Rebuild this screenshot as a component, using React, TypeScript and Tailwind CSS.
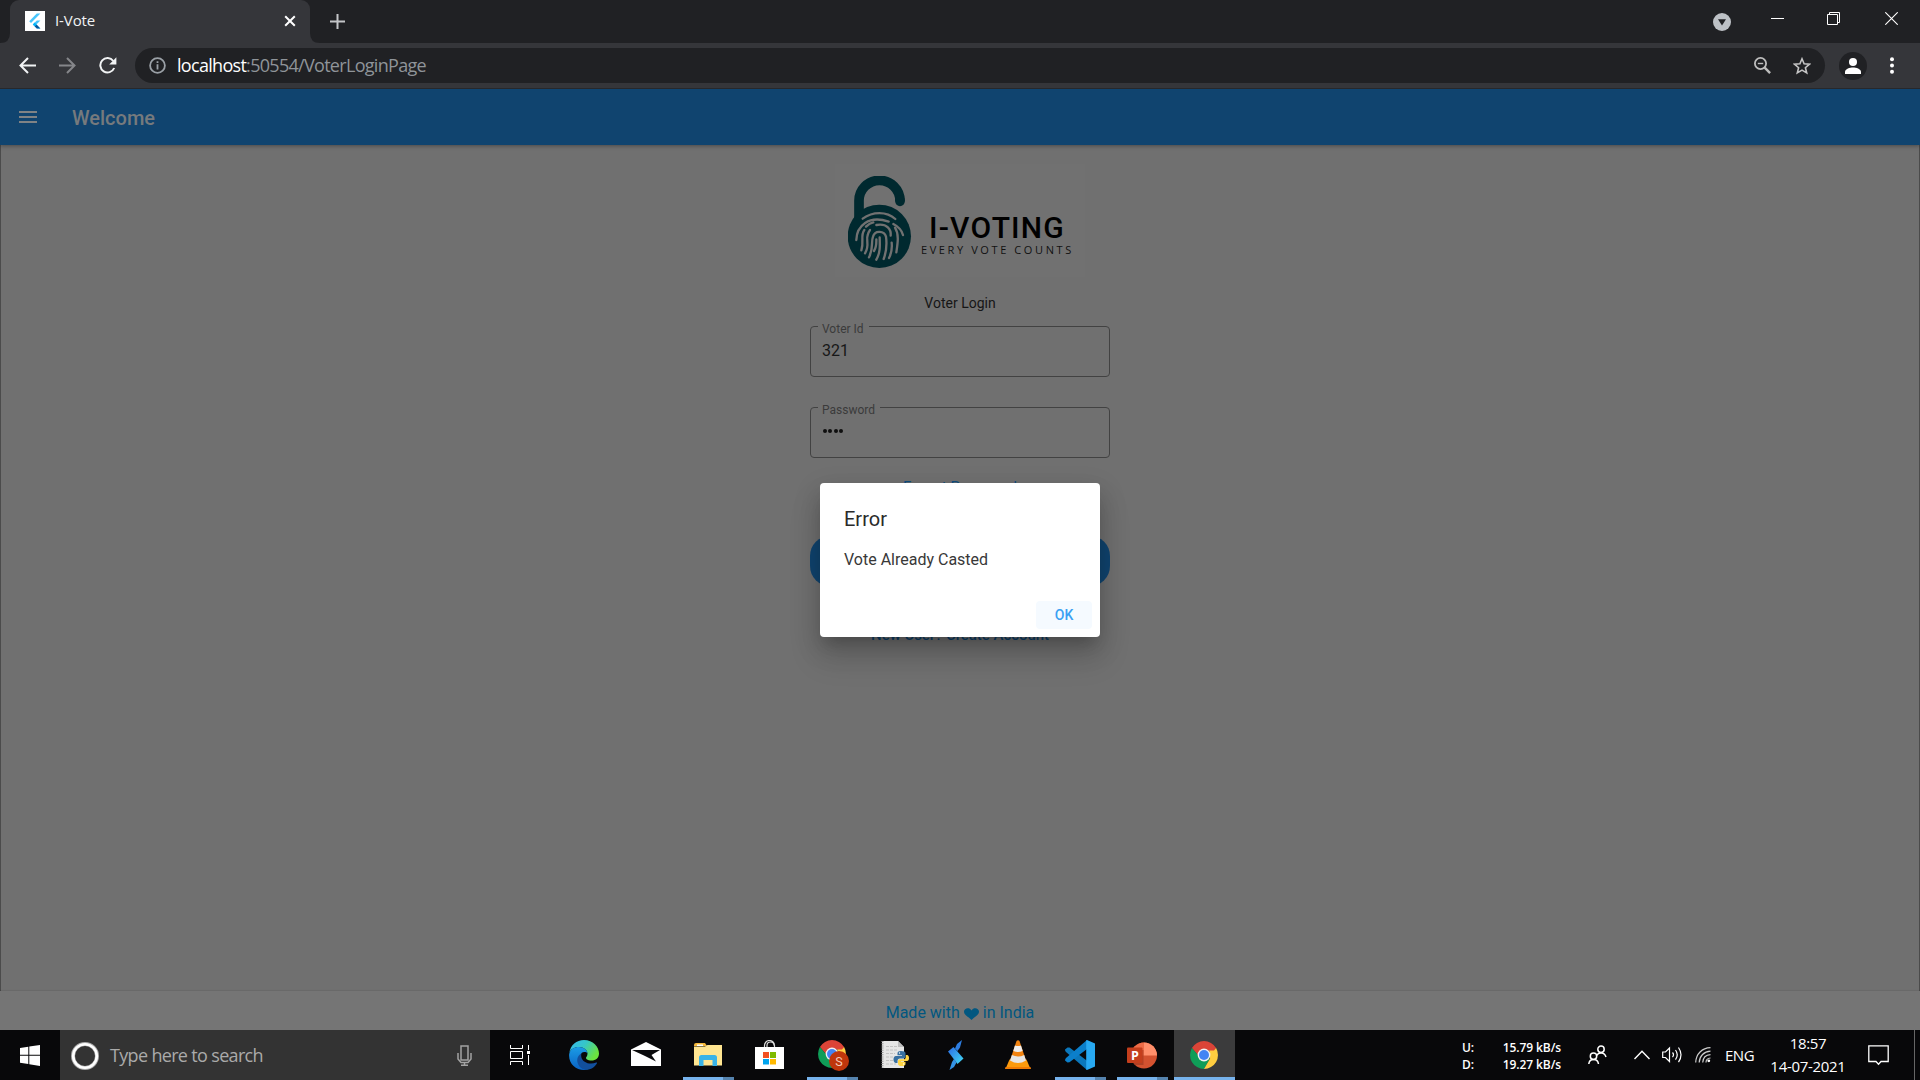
import type { ReactNode } from "react";

const SEGOE = "font-['Open_Sans',sans-serif]";

/* ---------- browser chrome ---------- */

function TabStrip() {
  return (
    <div className="flex h-[43px] shrink-0 items-start bg-[#202124]">
      <svg width="10" height="43" className="shrink-0"><path d="M10 33 Q10 43 0 43 H10Z" fill="#35363a" /></svg>
      <div className="flex h-[43px] w-[300px] shrink-0 items-center rounded-t-[9px] bg-[#35363a] pl-[15px] pr-[10px]">
        <svg width="20" height="20" viewBox="0 0 20 20" className="-mt-px">
          <rect width="20" height="20" fill="#fff" />
          <path d="M4.2 10.2 11.8 2.6h3.6L6 12z" fill="#47c5fb" />
          <path d="M15.4 9.4h-3.6L7.8 13.4 11.8 17.4h3.6l-4-4z" fill="#47c5fb" />
          <path d="m9.6 15.2 2.2 2.2h3.6l-3.9-4z" fill="#00569e" />
          <path d="m7.8 13.4 1.8-1.8 1.9 1.8-1.9 1.8z" fill="#00b5f8" />
        </svg>
        <span className={`${SEGOE} -mt-[3px] ml-[10px] w-[60px] text-[15px] leading-5 tracking-[-0.1px] text-[#f1f3f4]`}>I-Vote</span>
        <svg width="12" height="12" viewBox="0 0 12 12" className="ml-auto mr-[4px] -mt-[1px]"><path d="M1.2 1.2 10.8 10.8M10.8 1.2 1.2 10.8" stroke="#fff" strokeWidth="2" /></svg>
      </div>
      <svg width="10" height="43" className="shrink-0"><path d="M0 33 Q0 43 10 43 H0Z" fill="#35363a" /></svg>
      <svg width="15" height="15" viewBox="0 0 15 15" className="ml-[10px] mt-[14px] shrink-0"><path d="M7.500 0V15M0 7.500H15" stroke="#c3c5c8" strokeWidth="2" /></svg>
      <svg width="18" height="18" viewBox="0 0 18 18" className="ml-auto mr-[40px] mt-[13px]"><circle cx="9" cy="9" r="9" fill="#bdc1c6" /><path d="M5 6.3h8L9 12.4z" fill="#202124" /></svg>
      <svg width="13" height="13" className="mr-[43px] mt-[12px]"><path d="M0 6.5H13" stroke="#fff" /></svg>
      <svg width="13" height="13" className="mr-[45px] mt-[12px]" fill="none" stroke="#fff"><path d="M.5 2.500h10v10H.5zM2.500 2.500V.5h10v10h-2" /></svg>
      <svg width="13" height="13" className="mr-[22px] mt-[12px]"><path d="M.3.3 12.7 12.7M12.7.3.3 12.7" stroke="#fff" strokeWidth="1.1" /></svg>
    </div>
  );
}

function Toolbar() {
  return (
    <div className="flex h-[46px] shrink-0 items-center border-b border-[#27282b] bg-[#35363a] pl-[19px] pr-[23px]">
      <svg width="17" height="17" viewBox="0 0 17 17" fill="none" stroke="#f1f3f4" strokeWidth="2"><path d="M17 8.5H2M9 1 1.5 8.5 9 16" /></svg>
      <svg width="17" height="17" viewBox="0 0 17 17" fill="none" stroke="#85868a" strokeWidth="2" className="ml-[23px]"><path d="M0 8.5H15M8 1 15.5 8.5 8 16" /></svg>
      <svg width="18" height="17" viewBox="0 0 18 17" className="ml-[23px]"><path d="M14.3 4A7.2 7.2 0 1 0 15.2 11" fill="none" stroke="#f1f3f4" strokeWidth="2" /><path d="M17.4.2V7.4H10.2z" fill="#f1f3f4" /></svg>
      <div className="ml-[18px] flex h-[35px] w-[1690px] items-center rounded-full bg-[#202124] pl-[14px] pr-[14px]">
        <svg width="17" height="17" viewBox="0 0 17 17" fill="none" stroke="#9aa0a6" strokeWidth="1.8"><circle cx="8.5" cy="8.5" r="7.4" /><path d="M8.5 7.2v5.2M8.5 4.2v1.900" /></svg>
        <span className={`${SEGOE} -mt-[2px] ml-[11px] whitespace-nowrap text-[18px] leading-6 tracking-[-0.7px] text-[#8f9499]`}><span className="text-white">localhost</span>:50554/VoterLoginPage</span>
        <svg width="17" height="17" viewBox="0 0 17 17" fill="none" stroke="#bdbdbd" strokeWidth="1.8" className="ml-auto"><circle cx="6.5" cy="6.5" r="5.6" /><path d="M3.8 6.5h5.4" strokeWidth="1.4" /><path d="m10.7 10.7 5.4 5.4" strokeWidth="2.4" /></svg>
        <svg width="18" height="18" viewBox="0 0 18 18" className="ml-[22px]" fill="none" stroke="#c4c4c4" strokeWidth="1.6"><path d="m9 1.8 2.1 4.9 5.4.5-4.1 3.5 1.3 5.2L9 13.1l-4.7 2.8 1.3-5.2-4.1-3.5 5.4-.5z" /></svg>
      </div>
      <svg width="28" height="28" viewBox="0 0 28 28" className="ml-[14px]"><circle cx="14" cy="14" r="14" fill="#202124" /><circle cx="14" cy="10" r="4" fill="#fff" /><path d="M6 22v-2.200c0-3 5-4.400 8-4.400s8 1.400 8 4.400V22z" fill="#fff" /></svg>
      <svg width="4" height="17" viewBox="0 0 4 17" className="ml-auto mr-[3px]" fill="#fff"><circle cx="2" cy="2.2" r="2" /><circle cx="2" cy="8.5" r="2" /><circle cx="2" cy="14.8" r="2" /></svg>
    </div>
  );
}

/* ---------- voting page ---------- */

function Logo() {
  return (
    <div className="mt-[19px] flex h-[113px] w-[250px] bg-[#717171] pl-[13px] pt-[12px]">
      <svg width="64" height="92" viewBox="144 78 192 276" fill="none" className="shrink-0">
        <path d="M177 230V153A61.500 61.500 0 0 1 300 152V154" stroke="#00292f" strokeWidth="29" />
        <path d="M300 150V154" stroke="#00292f" strokeWidth="29" strokeLinecap="round" />
        <circle cx="238" cy="259" r="95" fill="#00292f" />
        <g stroke="#717171" strokeWidth="7" strokeLinecap="round">
          <path d="M188 206C218 184 260 183 286 207" />
          <path d="M169 270C170 228 206 194 266 215" />
          <path d="M280 222C297 231 306 243 309 255" />
          <path d="M184 301C193 275 180 257 193 240" />
          <path d="M198 230C208 220 214 218 220 217" />
          <path d="M229 225C262 219 274 239 272 257" />
          <path d="M285 233C298 253 293 280 289 307" />
          <path d="M195 310C210 286 197 269 203 256C204 249 207 244 210 240" />
          <path d="M207 322C222 292 212 278 219 260C225 239 253 243 258 260C261 282 261 300 251 327" />
          <path d="M229 329C241 308 240 288 239 262" />
          <path d="M229 268C229 283 230 291 222 303" />
          <path d="M275 278C277 298 274 311 267 324" />
        </g>
      </svg>
      <div className="flex flex-col pt-[34px]">
        <span className="ml-[17px] h-[36px] whitespace-nowrap font-['Roboto',sans-serif] text-[30px] font-medium leading-[36px] tracking-[1.200px] text-black">I-VOTING</span>
        <span className="ml-[9px] mt-[-4px] h-[16px] whitespace-nowrap font-['Open_Sans',sans-serif] text-[11px] leading-4 tracking-[2.600px] text-[#111]">EVERY VOTE COUNTS</span>
      </div>
    </div>
  );
}

function Field({ label, children, className }: { label: string; children: ReactNode; className: string }) {
  return (
    <fieldset className={`${className} w-[300px] rounded-[4px] border border-[#424242] pl-[7px]`}>
      <legend className="h-[12px] px-[4px] text-[12px] leading-[16px] text-[#3b3b3b]">
        <span className="relative top-px pr-[1px]">{label}</span>
      </legend>
      {children}
    </fieldset>
  );
}

function LoginPage() {
  return (
    <main className="relative flex h-[941px] shrink-0 flex-col overflow-hidden bg-[#707070] font-['Roboto',sans-serif]">
      <header className="z-10 flex h-[56px] shrink-0 items-center bg-[#10446f] pl-[19px] shadow-[0_1px_4px_rgba(0,0,0,0.35)]">
        <svg width="18" height="12" viewBox="0 0 18 12" fill="#808385"><path d="M0 0h18v2H0zM0 5h18v2H0zM0 10h18v2H0z" /></svg>
        <h1 className="ml-[35px] mt-px text-[20px] font-medium leading-6 text-[#767a7d]">Welcome</h1>
      </header>
      <section className="flex flex-1 flex-col items-center border-x border-[#4b4b4b]">
        <Logo />
        <p className="mt-[17px] text-[14px] leading-[18px] text-[#161616]">Voter Login</p>
        <Field label="Voter Id" className="mt-[8px] h-[57px]">
          <div className="px-[4px] pt-[9px] text-[16px] leading-[20px] text-[#171717]">321</div>
        </Field>
        <Field label="Password" className="mt-[24px] h-[57px]">
          <div className="flex gap-[1.400px] px-[5px] pt-[16px]">
            {[0, 1, 2, 3].map((n) => <span key={n} className="size-[4px] rounded-full bg-[#0f0f0f]" />)}
          </div>
        </Field>
        <a className="mt-[19px] text-[15px] leading-[20px] tracking-[0.05px] text-[#0e4c7d]">Forgot Password</a>
        <div className="mt-[39px] h-[50px] w-[300px] rounded-[20px] bg-[#10446f]" />
        <a className="mt-[39px] text-[15px] font-medium leading-[20px] tracking-[-0.05px] text-[#0e3f68]">New User? Create Account</a>
      </section>
      <footer className="flex h-[39px] shrink-0 items-center justify-center bg-[#757575] pt-[4px] text-[16px] leading-5 text-[#015780] shadow-[0_-1px_1px_rgba(0,0,0,0.06)]">
        Made with
        <svg width="15" height="12" viewBox="0 0 15 12" className="mx-[4px] mt-[2px]"><path d="M7.500 12C4.500 8.800 0 7.300 0 3.600 0 .3 5.300-1.200 7.500 2.500 9.700-1.200 15 .3 15 3.600c0 3.700-4.500 5.200-7.500 8.400z" fill="#015780" /></svg>
        in India
      </footer>
      <div className="absolute inset-0 z-20 flex items-start justify-center pt-[394px]">
        <div role="dialog" className="flex h-[154px] w-[280px] flex-col rounded-[4px] bg-white px-[24px] pt-[23px] shadow-[0_11px_15px_-7px_rgba(0,0,0,0.2),0_20px_30px_3px_rgba(0,0,0,0.12),0_9px_26px_4px_rgba(0,0,0,0.1)]">
          <h2 className="text-[20px] leading-[26px] text-[#2a2a2a]">Error</h2>
          <p className="mt-[17px] text-[16px] leading-[22px] text-[#383838]">Vote Already Casted</p>
          <button className="-mr-[16px] ml-auto mt-[30px] h-[28px] w-[56px] rounded-[4px] bg-[#f5faff] text-[14px] font-medium text-[#3aa0f3]">OK</button>
        </div>
      </div>
    </main>
  );
}

/* ---------- taskbar ---------- */

const EdgeIcon = () => (
  <svg width="30" height="30" viewBox="0 0 30 30">
    <defs>
      <linearGradient id="eg" x1="0" y1="0" x2="1" y2=".5"><stop stopColor="#35b8f1" /><stop offset=".5" stopColor="#36c6c8" /><stop offset="1" stopColor="#6be33e" /></linearGradient>
      <linearGradient id="eb" x1="0" y1="0" x2="0" y2="1"><stop stopColor="#1b9ce6" /><stop offset="1" stopColor="#0a62c4" /></linearGradient>
    </defs>
    <path d="M.3 13C1.500 5 7.500 0 15 0c9 0 15 6.500 15 13.500 0 4.500-3.300 7-7.500 7-4 0-5.500-1.600-5.500-2.800 0-.8 1.500-1.500 1.500-4C18.500 10 14.500 7 10 7 5 7 1.500 9.500.3 13z" fill="url(#eg)" />
    <path d="M.2 14C1 9.500 5 7 10 7c4.800 0 8.300 3.200 8.500 6-1.200-1-6.500-2.500-7 2.800-.3 5 3 11 9 12.500C19 29.500 17 30 15 30 6.500 30-.8 23 .2 14z" fill="url(#eb)" />
    <path d="M12.500 13.200c-2.300 1.300-4.300 4-4.300 7 0 5 4.300 9.500 8.800 9.600 5 0 9-3 11-6.600.3-.6-.2-1-.8-.7-6 2.700-13.700.3-14.900-5.500-.3-1.400-.2-2.700.2-3.800z" fill="#124f9c" />
  </svg>
);

const MailIcon = () => (
  <svg width="30" height="24" viewBox="0 0 30 24">
    <path d="M0 7.500 15 0 30 7.500V24H0z" fill="#fff" />
    <path d="M1 8H29L20.500 13 25 19.500 13.500 13.700z" fill="#0a0a0c" />
  </svg>
);

const FolderIcon = () => (
  <svg width="28" height="23" viewBox="0 0 28 23">
    <path d="M0 2q0-2 2-2h9l2 3H0z" fill="#f6b93b" /><path d="M3 1.500h6V3H3z" fill="#fff" />
    <path d="M0 3.500h11L13.500 2H28v20.500H0z" fill="#ffe591" />
    <path d="M5 23V14.500Q5 12 7.500 12h13q2.500 0 2.500 2.500V23h-4.500v-6h-9v6z" fill="#39b3e8" />
  </svg>
);

const StoreIcon = () => (
  <svg width="29" height="29" viewBox="0 0 29 29">
    <path d="M9.500 8V5.500a5 5 0 0 1 10 0V8M12 8V5.500a3.500 3.500 0 0 1 7 0" fill="none" stroke="#ddd" strokeWidth="1.200" />
    <path d="M0 7h29v22H0z" fill="#fff" />
    <path d="M8 12h6v6H8z" fill="#f25022" /><path d="M15 12h6v6h-6z" fill="#7fba00" /><path d="M8 19h6v5.500H8z" fill="#00a4ef" /><path d="M15 19h6v5.500h-6z" fill="#ffb900" />
  </svg>
);

const ChromeIcon = ({ badge = false }: { badge?: boolean }) => (
  <svg width={badge ? 31 : 28} height={badge ? 31 : 28} viewBox={badge ? "0 0 31 31" : "0 0 28 28"}>
    <path d="M1.900 7A14 14 0 0 1 26.100 7H14v7H7.900z" fill="#db4437" />
    <path d="M1.900 7A14 14 0 0 0 14 28L20 17.500 14 14H7.900z" fill="#0f9d58" />
    <path d="M26.100 7A14 14 0 0 1 14 28L20.100 17.500 19 7.700z" fill="#ffcd40" />
    <path d="M14 7H26.100L24 9.500H14z" fill="#db4437" />
    <circle cx="14" cy="14" r="6.400" fill="#f1f1f1" /><circle cx="14" cy="14" r="5" fill="#4285f4" />
    {badge && <><circle cx="21" cy="21" r="10" fill="#bf360c" /><text x="21" y="25.500" textAnchor="middle" fontSize="12.500" fontFamily="Roboto" fill="#f3c9ba">S</text></>}
  </svg>
);

const PythonFileIcon = () => (
  <svg width="28" height="29" viewBox="0 0 28 29">
    <path d="M1 1h16l6 6v21H1z" fill="#e6e6e6" />
    <path d="M1.500 1v27" stroke="#999" strokeWidth="2" strokeDasharray="1 1.200" />
    <path d="M5 6.500h11M5 10h12M5 13.500h9M5 17h7M5 20.500h7M5 24h10" stroke="#c2c2c2" strokeDasharray="3 1" />
    <path d="M17 1v6h6z" fill="#bdbdbd" />
    <path d="M20 11c-3 0-3.500 1.200-3.500 2.300v2H21v.8h-6c-2 0-2.500 1.800-2.500 3.600S13.500 23 15 23h1.500v-2c0-1.500 1-2.500 2.500-2.500h3.500c1.200 0 2-.8 2-2v-3.200C24.500 11.800 23 11 20 11z" fill="#3870a0" />
    <path d="M21 26c3 0 3.500-1.200 3.500-2.300v-2H20v-.8h6c1.600 0 2-1.300 2-2.900s-.6-3-2-3h-1.200v2c0 1.500-1 2.300-2.300 2.300H19c-1.300 0-2 .9-2 2v2.400C17 25.200 18.500 26 21 26z" fill="#ffd543" />
    <circle cx="18.500" cy="13" r=".7" fill="#fff" /><circle cx="22.700" cy="24" r=".7" fill="#fff" />
  </svg>
);

const BoltIcon = () => (
  <svg width="16" height="30" viewBox="0 0 16 30">
    <defs><linearGradient id="bg" x1="0" y1="0" x2="1" y2="1"><stop stopColor="#2b6be5" /><stop offset="1" stopColor="#42dcf4" /></linearGradient></defs>
    <path d="M14 0 12 7.500 9.500 11 7 8.500 9 4z" fill="#2d7de0" />
    <path d="M0 11.500 5.500 7 15.500 18.500 9.500 24z" fill="url(#bg)" />
    <path d="M6 19 8.500 22.500 6 27 1.500 30 4 22z" fill="#3493e6" />
  </svg>
);

const VlcIcon = () => (
  <svg width="26" height="29" viewBox="0 0 26 29">
    <path d="M4.500 19.500h17L25.500 29H.5z" fill="#fb9a0d" />
    <path d="M11.500 1q1.500-1.500 3 0L21 20.500q-8 5-16 0z" fill="#f28310" />
    <path d="M9.900 5.500 8.300 11q4.700 2 9.400 0L16 5.500q-3 1.200-6.100 0z" fill="#eee" />
    <path d="M6.900 15 5 20.500q8 5 16 0L19.200 15q-6.200 3-12.300 0z" fill="#e6e6e6" />
    <path d="M.5 27h25l.5 2H0z" fill="#f07b05" />
  </svg>
);

const CodeIcon = () => (
  <svg width="30" height="30" viewBox="0 0 30 30">
    <path d="M0 9.500 2.500 7.500 4.500 7.600 22 20.800V30L1 12q-1-1-1-2.500z" fill="#0b77bb" />
    <path d="M0 20.500 2.500 22.400 4.500 22.300 22 9V0L1 18q-1 1-1 2.500z" fill="#0b7fcb" />
    <path d="M22 0 30 3.500v23L22 30q-.8 0-.8-1V1q0-1 .8-1z" fill="#28a9f2" />
  </svg>
);

const PowerPointIcon = () => (
  <svg width="30" height="27" viewBox="0 0 30 27">
    <circle cx="17" cy="13.500" r="13" fill="#d35230" />
    <path d="M17 .5V13.500H4A13 13 0 0 1 17 .5z" fill="#ed6c47" />
    <path d="M17 .5A13 13 0 0 1 30 13.500H17z" fill="#ff8f6b" />
    <path d="M4 8h12.500v15H7z" fill="#8f2f1a" opacity=".5" />
    <rect y="5.500" width="15.500" height="15.500" rx="1" fill="#c43e1c" />
    <text x="7.900" y="18" textAnchor="middle" fontSize="12.500" fontWeight="700" fontFamily="Open Sans" fill="#fff">P</text>
  </svg>
);

const APPS: { icon: ReactNode; state: "idle" | "open" | "active"; pad: string }[] = [
  { icon: <EdgeIcon />, state: "idle", pad: "" },
  { icon: <MailIcon />, state: "idle", pad: "pb-[2px]" },
  { icon: <FolderIcon />, state: "open", pad: "pb-[2px]" },
  { icon: <StoreIcon />, state: "idle", pad: "pb-px pr-[2px]" },
  { icon: <ChromeIcon badge />, state: "open", pad: "pt-[3px] pl-[2px]" },
  { icon: <PythonFileIcon />, state: "idle", pad: "pb-px pl-[2px]" },
  { icon: <BoltIcon />, state: "idle", pad: "" },
  { icon: <VlcIcon />, state: "idle", pad: "pb-px" },
  { icon: <CodeIcon />, state: "open", pad: "" },
  { icon: <PowerPointIcon />, state: "open", pad: "" },
  { icon: <ChromeIcon />, state: "active", pad: "pr-[2px]" },
];

function AppButton({ icon, state, pad }: (typeof APPS)[number]) {
  return (
    <div className={state === "active" ? "ml-px flex h-[50px] w-[61px] shrink-0 flex-col bg-[#3b3b3c]" : "flex h-[50px] w-[62px] shrink-0 flex-col"}>
      <div className={`flex h-[47px] items-center justify-center pt-[3px] ${pad}`}>{icon}</div>
      {state === "active" && <div className="h-[3px] bg-[#76b2ec]" />}
      {state === "open" && (
        <div className="mx-auto flex h-[3px] w-[51px]"><div className="w-[40px] bg-[#76b2ec]" /><div className="flex-1 bg-[#5583ae]" /></div>
      )}
    </div>
  );
}

function Taskbar() {
  return (
    <div className={`${SEGOE} flex h-[50px] shrink-0 items-center bg-[#08080a] text-white`}>
      <div className="flex h-full w-[60px] items-center justify-center">
        <svg width="20" height="21" viewBox="0 0 20 21" fill="#fff"><path d="M0 3 8.300 1.700V9.800H0zM9.300 1.500 20 0V9.800H9.300zM0 10.800H8.300V19L0 17.800zM9.300 10.800H20V21L9.300 19.300z" /></svg>
      </div>
      <div className="flex h-full w-[430px] items-center bg-[#333] pl-[11px] pr-[18px]">
        <svg width="28" height="28" viewBox="0 0 28 28" className="mt-[1px]"><circle cx="14" cy="14" r="12" fill="none" stroke="#aaa" strokeWidth="4" /><circle cx="14" cy="14" r="11.800" fill="none" stroke="#fff" strokeWidth="2.600" /></svg>
        <span className="ml-[11px] -mt-px whitespace-nowrap text-[18px] leading-6 tracking-[-0.67px] text-[#aaa]">Type here to search</span>
        <svg width="15" height="21" viewBox="0 0 15 21" fill="none" stroke="#a3a3a3" strokeWidth="1.500" className="ml-auto"><rect x="4" y="1" width="7" height="14" /><path d="M1 8v6l3 3.500h7l3-3.500V8M7.500 18v2M4 20.200h7" /></svg>
      </div>
      <svg width="21" height="20" viewBox="0 0 21 20" fill="none" stroke="#fff" className="ml-[20px] mr-[22px]"><path d="M.5 0V3.500h12V0M.5 6.500h12v7H.5zM.5 20V16.500h12V20M18.500 0V5M18.500 10V20" /><rect x="17" y="6" width="3" height="3" fill="#fff" stroke="none" /></svg>
      {APPS.map((app, i) => <AppButton key={i} {...app} />)}
      <div className="ml-auto flex items-center">
        <div className="mt-[2px] w-[99px] text-[12px] font-semibold leading-[17px] tracking-[-0.1px]">
          <div className="flex justify-between"><span>U:</span><span>15.79 kB/s</span></div>
          <div className="flex justify-between"><span>D:</span><span>19.27 kB/s</span></div>
        </div>
        <svg width="19" height="20" viewBox="0 0 19 20" fill="none" stroke="#fff" strokeWidth="1.500" className="ml-[27px]"><circle cx="13" cy="4.200" r="3.200" /><path d="M8.800 10.500C10.500 6.800 16.500 7 18 12" /><circle cx="5.500" cy="11.200" r="3.200" /><path d="M.8 19c.5-6 9-6 9.700 0" /></svg>
        <svg width="16" height="10" viewBox="0 0 16 10" fill="none" stroke="#fff" strokeWidth="1.400" className="ml-[27px]"><path d="M.5 9 8 1.200 15.500 9" /></svg>
        <svg width="21" height="18" viewBox="0 0 21 18" fill="none" stroke="#fff" strokeWidth="1.200" className="ml-[12px]"><path d="M.7 6H3.500L7.500 2V15.500L3.500 11.500H.7z" /><path d="M10.500 6.500Q12.500 8.800 10.500 11.200M13.500 4Q17 8.800 13.500 13.700M16.500 1.500Q21.500 8.800 16.500 16.200" /></svg>
        <svg width="16" height="16" viewBox="0 0 16 16" fill="none" stroke="#ccc" strokeWidth="1.200" className="ml-[12px]"><path d="M.7 15.500C1 7 7 1 15.500.7M4.200 15.500C4.500 9 9 4.500 15.500 4.200M7.700 15.500C8 11 11 8 15.500 7.700M11 15.500Q11 11.200 15.500 11" /><circle cx="13.800" cy="13.800" r="1.400" fill="#fff" stroke="none" /></svg>
        <span className="ml-[14px] w-[31px] text-[15px] leading-5 tracking-[-0.5px]">ENG</span>
        <div className="ml-[9px] w-[86px] text-center text-[15px] leading-[23px] tracking-[-0.3px]">
          <div>18:57</div>
          <div>14-07-2021</div>
        </div>
        <svg width="21" height="21" viewBox="0 0 21 21" fill="none" stroke="#fff" strokeWidth="1.300" className="ml-[17px] mr-px"><path d="M.8.8H20.200V16.500H13L10.500 19.200 8 16.500H.8z" /></svg>
        <div className="ml-[24px] mr-[5px] h-[50px] w-px bg-[#666]" />
      </div>
    </div>
  );
}

export default function App() {
  return (
    <div className="flex h-[1080px] w-[1920px] flex-col overflow-hidden">
      <TabStrip />
      <Toolbar />
      <LoginPage />
      <Taskbar />
    </div>
  );
}
